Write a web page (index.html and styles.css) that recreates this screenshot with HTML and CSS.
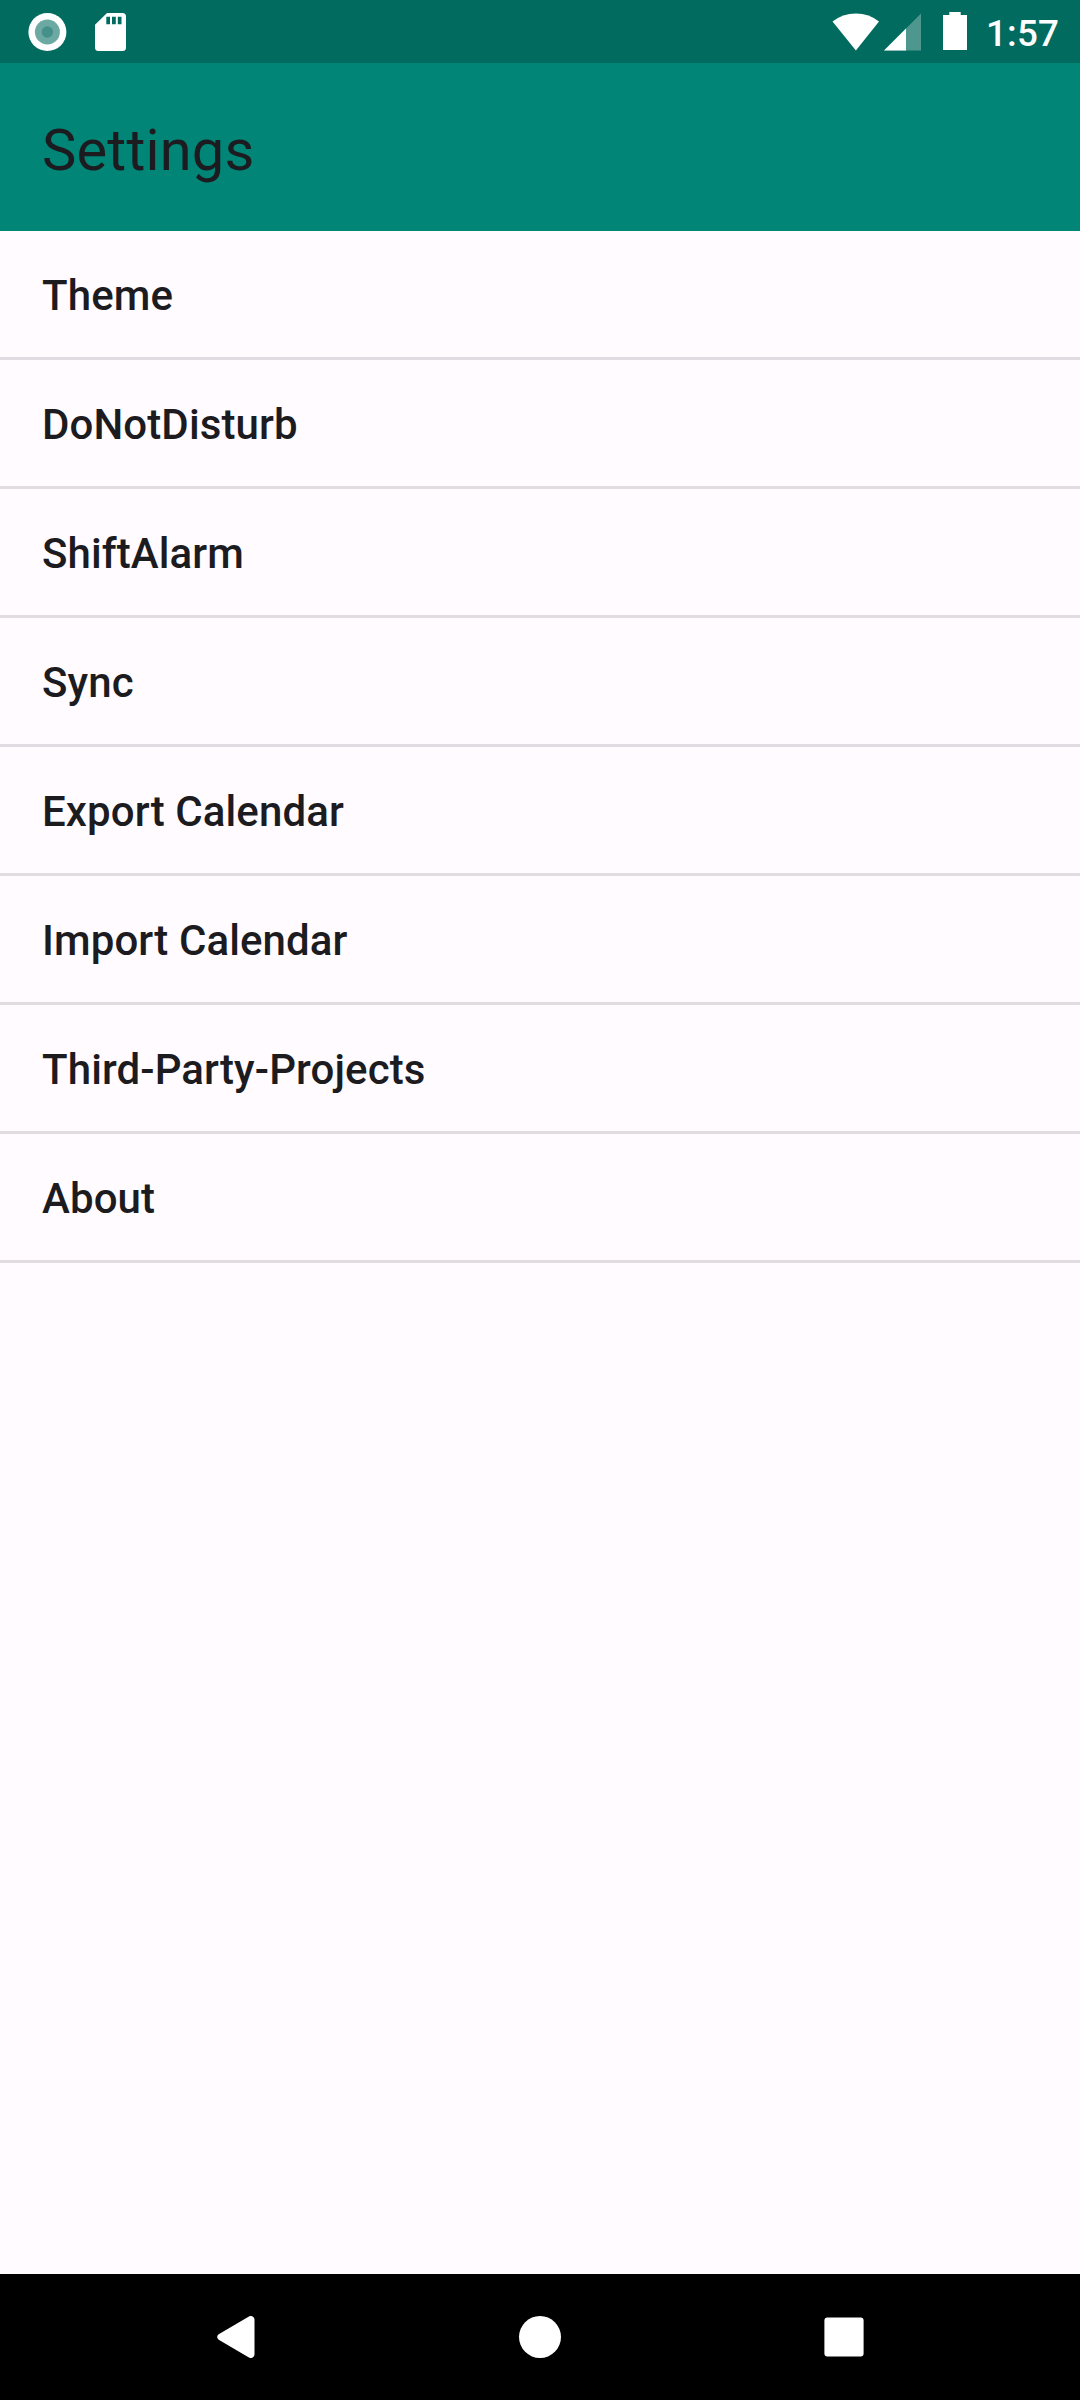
FILE: index.html
```html
<!DOCTYPE html>
<html lang="en">
<head>
<meta charset="utf-8">
<title>Settings</title>
<link rel="stylesheet" href="styles.css">
</head>
<body>
<div class="screen">
  <div class="status-bar">
    <svg class="icon-record" width="39" height="38" viewBox="0 0 39 38"><circle cx="19.400" cy="19" r="19" fill="#fff"/><circle cx="19.400" cy="19" r="12.500" fill="#6ba9a2"/><circle cx="19.400" cy="19" r="5.700" fill="#44918a"/></svg>
    <svg class="icon-sd" width="31" height="38" viewBox="0 0 31 38"><path fill="#fff" fill-rule="evenodd" d="M12 0H27.500Q31 0 31 3.500V34.500Q31 38 27.500 38H3.500Q0 38 0 34.500V11.800ZM11.300 3.700V11.300H15V3.700ZM17 3.700V11.300H20.800V3.700ZM22.800 3.700V11.300H26.500V3.700Z"/></svg>
    <svg class="icon-wifi" width="47" height="38" viewBox="0 0 47 38"><path fill="#fff" d="M.5 8.500Q10.500 .4 23.900 .4T47 8.500L23.900 37.600Z"/></svg>
    <svg class="icon-signal" width="37" height="38" viewBox="0 0 37 38"><path fill="#fff" fill-opacity=".3" d="M37 .5V37.500H0Z"/><path fill="#fff" d="M22 15.500V37.500H0Z"/></svg>
    <svg class="icon-battery" width="24" height="38" viewBox="0 0 24 38"><path fill="#fff" d="M6.300 0H17.700V3H24V38H0V3H6.300Z"/></svg>
    <span class="clock">1:57</span>
  </div>
  <header class="app-bar"><h1 class="title">Settings</h1></header>
  <ul class="list">
    <li class="item">Theme</li>
    <li class="item">DoNotDisturb</li>
    <li class="item">ShiftAlarm</li>
    <li class="item">Sync</li>
    <li class="item">Export Calendar</li>
    <li class="item">Import Calendar</li>
    <li class="item">Third-Party-Projects</li>
    <li class="item">About</li>
  </ul>
  <nav class="nav-bar">
    <svg class="nav-back" width="38" height="42" viewBox="0 0 38 42"><path fill="#fff" d="M1.700 18.300 31.500 .7Q34 -.8 36 .8Q37.500 2 37.500 3.500V38.500Q37.500 40 36 41.200Q34 42.800 31.500 41.300L1.700 23.700Q-1.400 21 1.700 18.300Z"/></svg>
    <svg class="nav-home" width="42" height="42" viewBox="0 0 42 42"><circle cx="21" cy="21" r="21" fill="#fff"/></svg>
    <svg class="nav-recents" width="40" height="40" viewBox="0 0 40 40"><rect x=".4" y=".4" width="39.200" height="39.200" rx="3" fill="#fff"/></svg>
  </nav>
</div>
</body>
</html>
```
FILE: styles.css
```css
body {
  margin: 0;
  font-family: Roboto, sans-serif;
  color: #1c1b1f;
}

.screen {
  display: flex;
  flex-direction: column;
  width: 1080px;
  height: 2400px;
  background: #fffbfe;
}

.status-bar {
  display: flex;
  align-items: center;
  box-sizing: border-box;
  height: 63px;
  padding: 0 21px 0 28px;
  background: #006b5e;
}

.status-bar svg {
  flex: none;
}

.icon-sd {
  margin-left: 28px;
}

.icon-wifi {
  margin-left: auto;
}

.icon-signal {
  margin-left: 5px;
}

.icon-battery {
  margin-bottom: 1px;
  margin-left: 22px;
}

.clock {
  width: 73px;
  margin-left: 19px;
  padding-top: 4px;
  font-size: 36.75px;
  font-weight: 500;
  line-height: 43px;
  letter-spacing: 0.2px;
  color: #fff;
}

.app-bar {
  display: flex;
  align-items: center;
  box-sizing: border-box;
  height: 168px;
  padding: 6px 42px 0;
  background: #018577;
}

.title {
  margin: 0;
  font-size: 57.75px;
  font-weight: 400;
  line-height: 68px;
  letter-spacing: 0.2px;
}

.list {
  flex: 1;
  margin: 0;
  padding: 0;
  list-style: none;
}

.item {
  display: flex;
  align-items: center;
  box-sizing: border-box;
  height: 129px;
  padding: 3px 42px 0;
  border-bottom: 3px solid #e1dce1;
  font-size: 42px;
  font-weight: 500;
  line-height: 50px;
  letter-spacing: 0.1px;
}

.nav-bar {
  display: flex;
  align-items: center;
  height: 126px;
  background: #000;
}

.nav-back {
  margin-left: 217px;
}

.nav-home {
  margin-left: 264px;
}

.nav-recents {
  margin-left: 263px;
}
```
